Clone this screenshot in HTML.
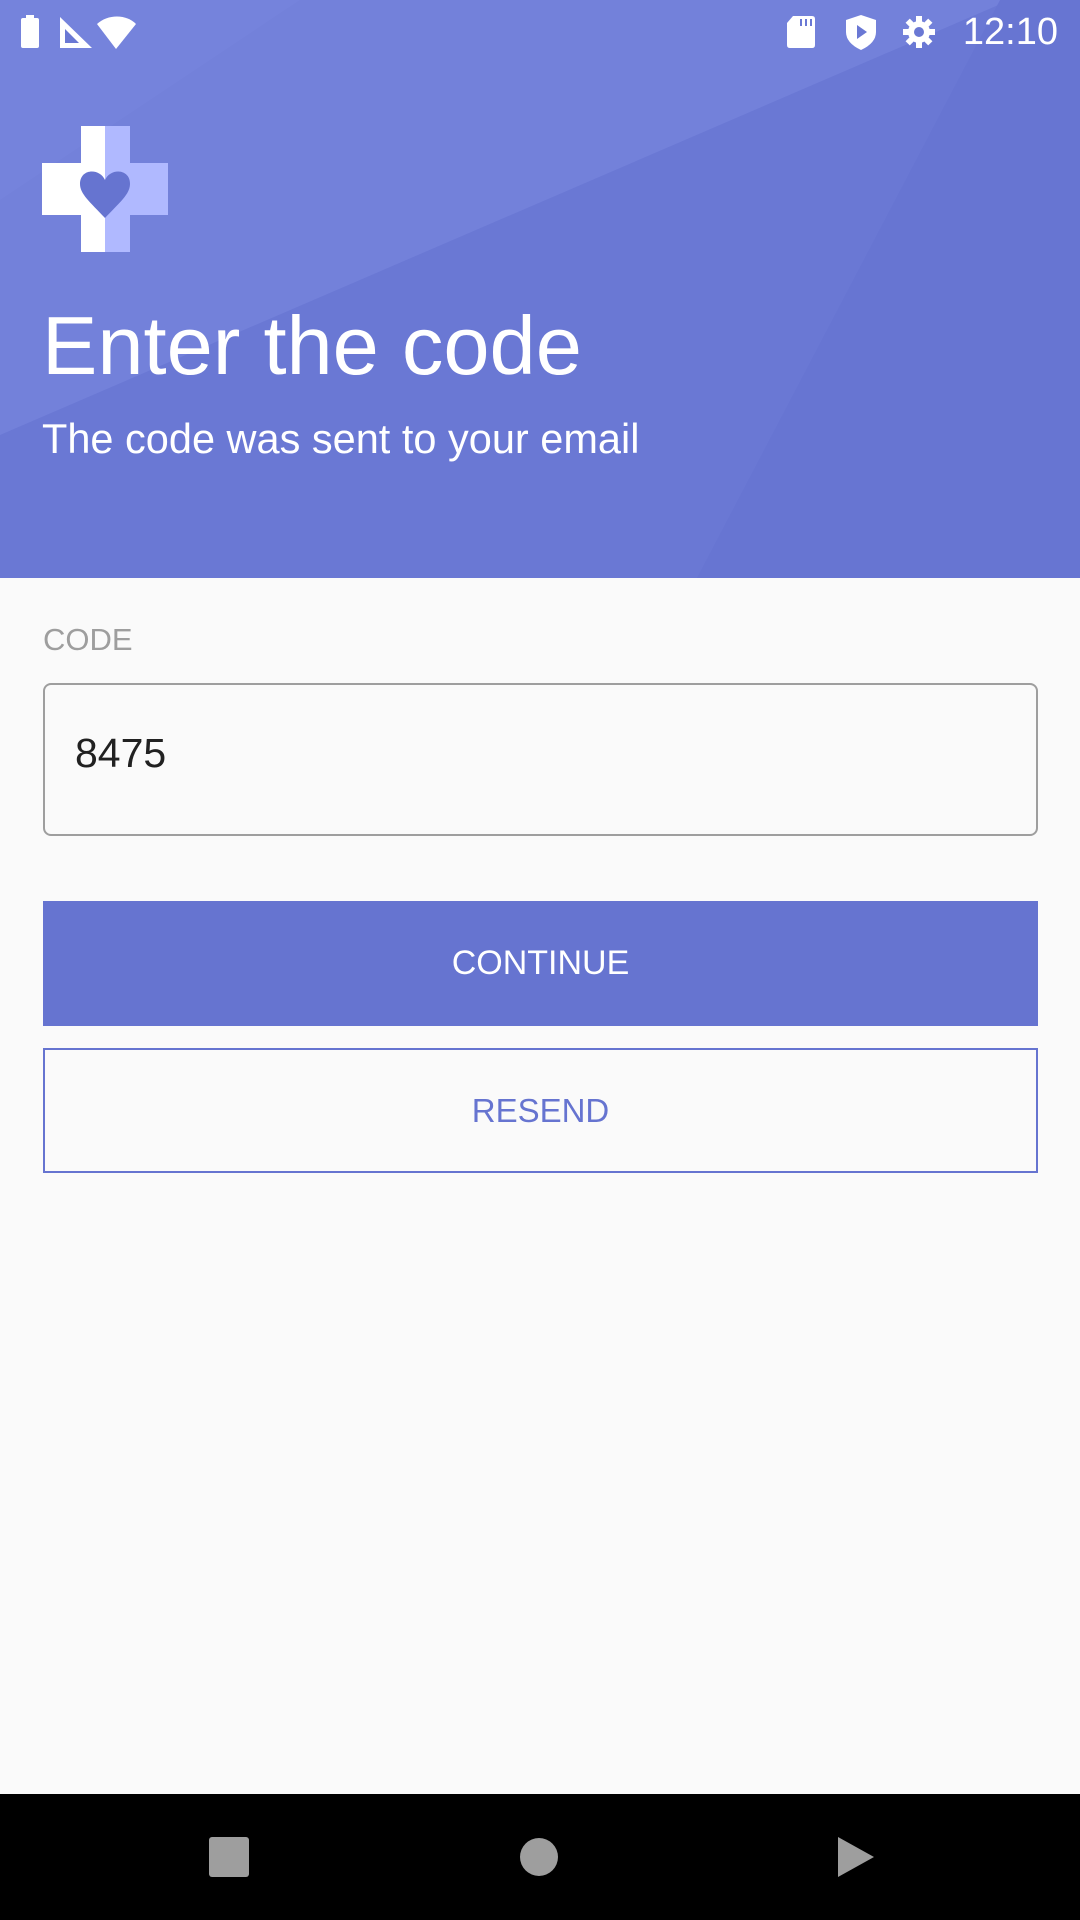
<!DOCTYPE html>
<html><head><meta charset="utf-8"><style>
*{margin:0;padding:0;box-sizing:border-box}
body{width:1080px;height:1920px;background:#fafafa;font-family:"Liberation Sans",Roboto,sans-serif;position:relative;overflow:hidden}
.hdr{position:absolute;left:0;top:0;width:1080px;height:578px;background:#6a78d4;overflow:hidden}
.abs{position:absolute}
.t{color:#fff;white-space:nowrap}
</style></head><body>
<div class="hdr">
<svg class="abs" style="left:0;top:0" width="1080" height="578">
<polygon points="0,0 1010,0 0,435" fill="#7381da"/>
<polygon points="1000,0 1080,0 1080,578 697,578" fill="#6775d2"/>
<polygon points="0,0 300,0 0,200" fill="#7987de" opacity="0.4"/>
</svg>
<svg class="abs" style="left:42px;top:126px" width="126" height="126" viewBox="0 0 126 126">
<rect x="39" y="0" width="49" height="126" fill="#fff"/>
<rect x="0" y="37" width="126" height="52" fill="#fff"/>
<rect x="63" y="0" width="25" height="126" fill="#b0b9ff"/>
<rect x="63" y="37" width="63" height="52" fill="#b0b9ff"/>
<path d="M63 54 C58 42 38 42 38 58 C38 68 48 76 63 92 C78 76 88 68 88 58 C88 42 68 42 63 54Z" fill="#6674d0"/>
</svg>
<div class="abs t" style="left:42px;top:296px;font-size:83px;line-height:100px">Enter the code</div>
<div class="abs t" style="left:42px;top:414px;font-size:41.5px;line-height:50px">The code was sent to your email</div>
<svg class="abs" style="left:18px;top:14px" width="120" height="36" viewBox="0 0 120 36">
<rect x="3" y="4" width="18" height="30" rx="2" fill="#fff"/><rect x="8" y="1" width="8" height="4" fill="#fff"/>
<path d="M42 3 L42 34 L74 34 Z" fill="#fff"/><path d="M47 15 L47 29 L61 29 Z" fill="#6a78d4"/>
<path d="M79 10 C90 0 108 0 118 10 L98 35 Z" fill="#fff"/>
</svg>
<svg class="abs" style="left:785px;top:12px" width="150" height="40" viewBox="0 0 150 40">
<path d="M8 4 L27 4 Q30 4 30 7 L30 33 Q30 36 27 36 L5 36 Q2 36 2 33 L2 11 Z" fill="#fff"/>
<rect x="15" y="7" width="2" height="7" fill="#6a78d4"/><rect x="20" y="7" width="2" height="7" fill="#6a78d4"/><rect x="25" y="7" width="2" height="7" fill="#6a78d4"/>
<path d="M76 3 L91 8 L91 20 Q91 31 76 38 Q61 31 61 20 L61 8 Z" fill="#fff"/><path d="M72 13 L82 20 L72 27Z" fill="#6a78d4"/>
<circle cx="134" cy="20" r="11" fill="#fff"/>
<g fill="#fff"><rect x="131" y="4" width="6" height="32"/><rect x="118" y="17" width="32" height="6"/><rect x="131" y="4" width="6" height="32" transform="rotate(45 134 20)"/><rect x="131" y="4" width="6" height="32" transform="rotate(-45 134 20)"/></g>
<circle cx="134" cy="20" r="5" fill="#6a78d4"/>
</svg>
<div class="abs t" style="right:22px;top:10px;font-size:38px;line-height:44px">12:10</div>
</div>
<div class="abs" style="left:43px;top:622px;font-size:31px;color:#9e9e9e">CODE</div>
<div class="abs" style="left:43px;top:683px;width:995px;height:153px;border:2px solid #9e9e9e;border-radius:8px"></div>
<div class="abs" style="left:75px;top:730px;font-size:41px;color:#212121">8475</div>
<div class="abs" style="left:43px;top:901px;width:995px;height:125px;background:#6674d0;color:#fff;font-size:34px;line-height:125px;text-align:center">CONTINUE</div>
<div class="abs" style="left:43px;top:1048px;width:995px;height:125px;border:2px solid #6674d0;color:#6674d0;font-size:33px;line-height:121px;text-align:center">RESEND</div>
<div class="abs" style="left:0;top:1794px;width:1080px;height:126px;background:#000"></div>
<div class="abs" style="left:209px;top:1837px;width:40px;height:40px;background:#9e9e9e;border-radius:3px"></div>
<div class="abs" style="left:520px;top:1838px;width:38px;height:38px;background:#9e9e9e;border-radius:50%"></div>
<svg class="abs" style="left:836px;top:1835px" width="40" height="44"><path d="M2 2 L38 22 L2 42Z" fill="#9e9e9e"/></svg>
</body></html>
